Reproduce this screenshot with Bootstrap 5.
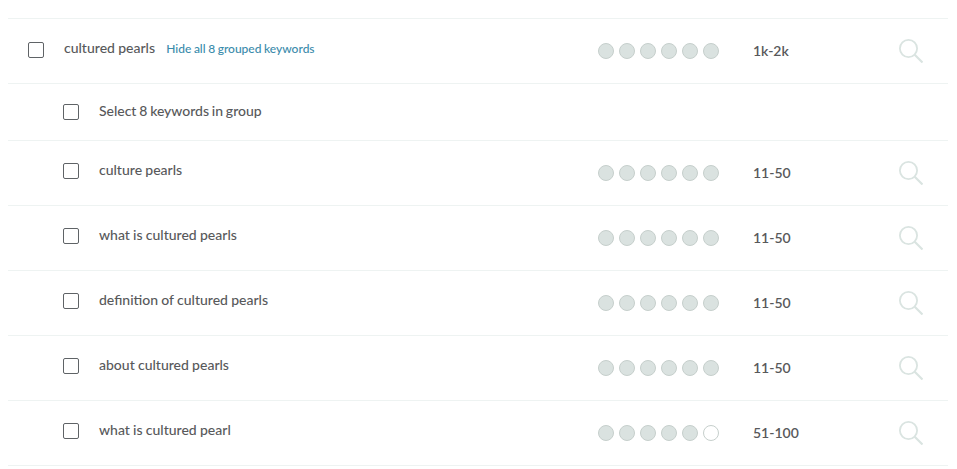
<!DOCTYPE html>
<html lang="en">
<head>
<meta charset="utf-8">
<title>Keywords</title>
<link href="https://cdn.jsdelivr.net/npm/bootstrap@5.3.0/dist/css/bootstrap.min.css" rel="stylesheet">
<style>
body { background:#fff; font-family:Lato,"Liberation Sans",sans-serif; color:#58595b; font-size:14px; }
.kw-list { margin:18px 9px 0 8px; border-top:1px solid #eef3f2; }
.kw-row { height:65px; border-bottom:1px solid #eef3f2; padding-left:20px; }
.kw-row.kw-short { height:57px; }
.kw-child { padding-left:55px; }
.kw-box { width:16px; height:16px; border:1.5px solid #5f6366; border-radius:2px; flex:none; margin-right:20px; margin-top:-3px; }
.kw-child .kw-box { margin-top:-5px; }
.kw-child.kw-short .kw-box { margin-top:0; }
.kw-main { width:534px; flex:none; font-weight:500; margin-top:-5px; line-height:20px; word-spacing:-.3px; }
.kw-child .kw-main { width:499px; margin-top:-7px; }
.kw-child.kw-short .kw-main { margin-top:-2px; width:auto; word-spacing:-.7px; letter-spacing:-.02px; }
.kw-link { color:#3a8bab; font-size:12px; margin-left:8px; text-decoration:none; word-spacing:-.5px; }
.kw-dots { width:155px; flex:none; gap:5px; }
.kw-dot { width:16px; height:16px; border-radius:50%; background:#dae2e0; border:1px solid #c6cfcc; }
.kw-dot.kw-off { background:#fff; }
.kw-vol { width:146px; flex:none; font-weight:600; margin-top:-1px; }
.kw-icon { width:24px; height:24px; flex:none; }
</style>
</head>
<body>
<svg width="0" height="0" class="d-block" aria-hidden="true"><symbol id="kw-search" viewBox="0 0 24 24"><circle cx="9.5" cy="9.5" r="8.6" fill="none" stroke="#dae4e1" stroke-width="1.8"/><path d="M15.7 15.7 23.5 23.5" stroke="#dae4e1" stroke-width="2.2" fill="none"/></symbol></svg>
<div class="kw-list">
  <div class="kw-row d-flex align-items-center">
    <span class="kw-box"></span>
    <div class="kw-main">cultured pearls <a class="kw-link" href="#">Hide all 8 grouped keywords</a></div>
    <div class="kw-dots d-flex"><i class="kw-dot"></i><i class="kw-dot"></i><i class="kw-dot"></i><i class="kw-dot"></i><i class="kw-dot"></i><i class="kw-dot"></i></div>
    <div class="kw-vol">1k-2k</div>
    <svg class="kw-icon"><use href="#kw-search"/></svg>
  </div>
  <div class="kw-row kw-short kw-child d-flex align-items-center">
    <span class="kw-box"></span>
    <div class="kw-main">Select 8 keywords in group</div>
  </div>
  <div class="kw-row kw-child d-flex align-items-center">
    <span class="kw-box"></span>
    <div class="kw-main">culture pearls</div>
    <div class="kw-dots d-flex"><i class="kw-dot"></i><i class="kw-dot"></i><i class="kw-dot"></i><i class="kw-dot"></i><i class="kw-dot"></i><i class="kw-dot"></i></div>
    <div class="kw-vol">11-50</div>
    <svg class="kw-icon"><use href="#kw-search"/></svg>
  </div>
  <div class="kw-row kw-child d-flex align-items-center">
    <span class="kw-box"></span>
    <div class="kw-main">what is cultured pearls</div>
    <div class="kw-dots d-flex"><i class="kw-dot"></i><i class="kw-dot"></i><i class="kw-dot"></i><i class="kw-dot"></i><i class="kw-dot"></i><i class="kw-dot"></i></div>
    <div class="kw-vol">11-50</div>
    <svg class="kw-icon"><use href="#kw-search"/></svg>
  </div>
  <div class="kw-row kw-child d-flex align-items-center">
    <span class="kw-box"></span>
    <div class="kw-main">definition of cultured pearls</div>
    <div class="kw-dots d-flex"><i class="kw-dot"></i><i class="kw-dot"></i><i class="kw-dot"></i><i class="kw-dot"></i><i class="kw-dot"></i><i class="kw-dot"></i></div>
    <div class="kw-vol">11-50</div>
    <svg class="kw-icon"><use href="#kw-search"/></svg>
  </div>
  <div class="kw-row kw-child d-flex align-items-center">
    <span class="kw-box"></span>
    <div class="kw-main">about cultured pearls</div>
    <div class="kw-dots d-flex"><i class="kw-dot"></i><i class="kw-dot"></i><i class="kw-dot"></i><i class="kw-dot"></i><i class="kw-dot"></i><i class="kw-dot"></i></div>
    <div class="kw-vol">11-50</div>
    <svg class="kw-icon"><use href="#kw-search"/></svg>
  </div>
  <div class="kw-row kw-child d-flex align-items-center">
    <span class="kw-box"></span>
    <div class="kw-main">what is cultured pearl</div>
    <div class="kw-dots d-flex"><i class="kw-dot"></i><i class="kw-dot"></i><i class="kw-dot"></i><i class="kw-dot"></i><i class="kw-dot"></i><i class="kw-dot kw-off"></i></div>
    <div class="kw-vol">51-100</div>
    <svg class="kw-icon"><use href="#kw-search"/></svg>
  </div>
</div>
</body>
</html>
